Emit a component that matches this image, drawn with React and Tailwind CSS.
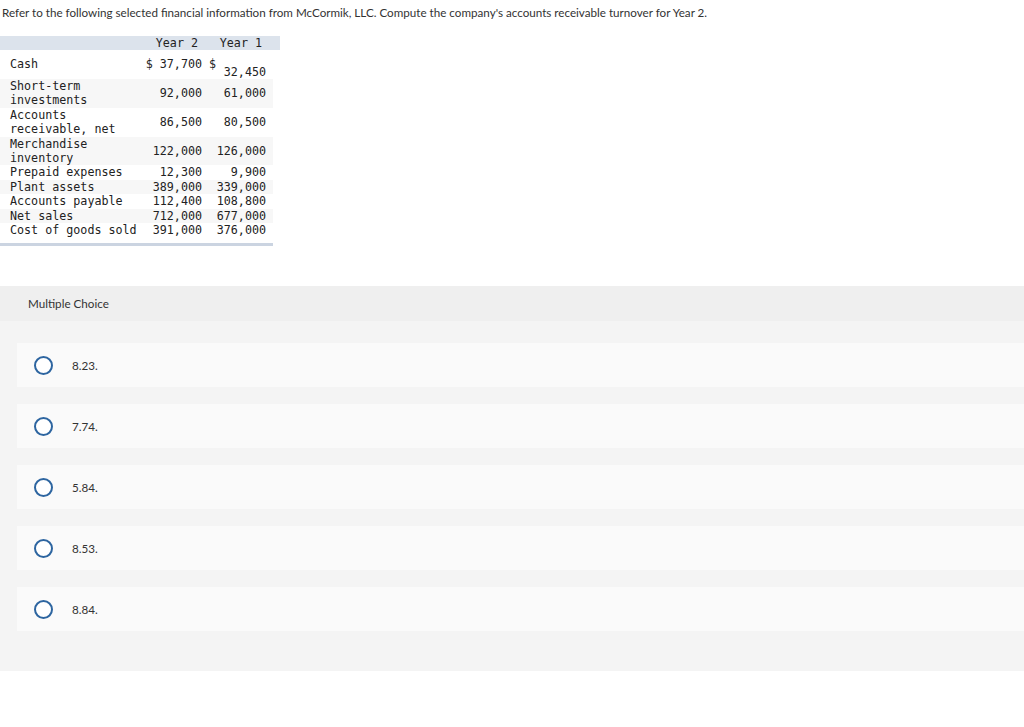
import React from 'react'

const rows = [
  { label: ['Cash'], y2: '$ 37,700', y1: '32,450', cash: true },
  { label: ['Short-term', 'investments'], y2: '92,000', y1: '61,000' },
  { label: ['Accounts', 'receivable, net'], y2: '86,500', y1: '80,500' },
  { label: ['Merchandise', 'inventory'], y2: '122,000', y1: '126,000' },
  { label: ['Prepaid expenses'], y2: '12,300', y1: '9,900' },
  { label: ['Plant assets'], y2: '389,000', y1: '339,000' },
  { label: ['Accounts payable'], y2: '112,400', y1: '108,800' },
  { label: ['Net sales'], y2: '712,000', y1: '677,000' },
  { label: ['Cost of goods sold'], y2: '391,000', y1: '376,000' },
]

const choices = ['8.23.', '7.74.', '5.84.', '8.53.', '8.84.']

function FinTable() {
  return (
    <div className="mt-[16px] w-[280px] font-['DejaVu_Sans_Mono',monospace] text-[11.7px] leading-[14.4px] text-[#222]">
      <div className="flex h-[14px] items-center bg-[#dce3ec]">
        <div className="w-[140px]" />
        <div className="w-[68px] pr-[10px] text-right">Year 2</div>
        <div className="w-[65px] pr-[11px] text-right">Year 1</div>
      </div>
      <div className="w-[273px]">
        {rows.map((r, i) => (
          <div
            key={i}
            className={`flex items-center ${i % 2 === 1 ? 'bg-[#f7f7f7]' : 'bg-white'} ${r.cash ? 'h-[29px]' : ''}`}
          >
            <div className="w-[140px] pl-[10px]">
              {r.label.map((l) => (
                <div key={l} className="whitespace-pre">{l}</div>
              ))}
            </div>
            <div className="w-[68px] pr-[6px] text-right whitespace-pre">{r.y2}</div>
            {r.cash ? (
              <div className="flex h-full w-[65px] items-center pr-[7px] text-right">
                <span className="ml-[1px]">$</span>
                <span className="ml-auto translate-y-[8px]">{r.y1}</span>
              </div>
            ) : (
              <div className="w-[65px] pr-[7px] text-right">{r.y1}</div>
            )}
          </div>
        ))}
      </div>
      <div className="mt-[6px] h-[3px] w-[273px] bg-[#cbd4e1]" />
    </div>
  )
}

export default function App() {
  return (
    <div className="min-h-screen bg-white font-['Lato',sans-serif] text-[#333]">
      <p className="pl-[2px] pt-[6px] text-[11.65px] leading-[14px]">
        Refer to the following selected financial information from McCormik, LLC. Compute the company's accounts receivable turnover for Year 2.
      </p>
      <FinTable />
      <div className="mt-[40px] bg-[#f4f4f4] pb-[40px]">
        <div className="flex h-[35px] items-center bg-[#efefef] pl-[28px] text-[11.65px]">Multiple Choice</div>
        <div className="flex flex-col gap-[17px] pl-[17px] pt-[22px]">
          {choices.map((c) => (
            <div key={c} className="flex h-[44px] items-center bg-[#fafafa] pl-[17px]">
              <span className="h-[19px] w-[19px] rounded-full border-2 border-[#2d65a0] bg-white" />
              <span className="ml-[19px] text-[11.65px]">{c}</span>
            </div>
          ))}
        </div>
      </div>
    </div>
  )
}
